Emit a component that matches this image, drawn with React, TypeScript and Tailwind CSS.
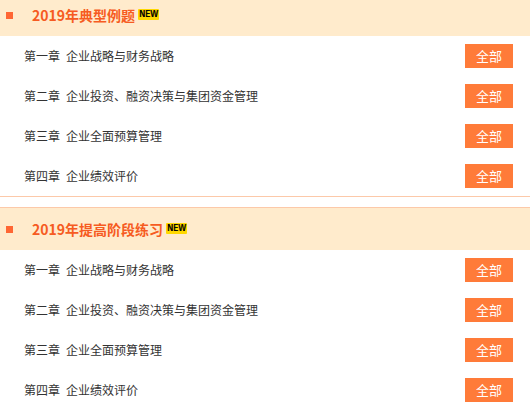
import React from 'react';

interface Section {
  title: string;
  chapters: { no: string; name: string }[];
}

const chapters = [
  { no: '第一章', name: '企业战略与财务战略' },
  { no: '第二章', name: '企业投资、融资决策与集团资金管理' },
  { no: '第三章', name: '企业全面预算管理' },
  { no: '第四章', name: '企业绩效评价' },
];

const sections: Section[] = [
  { title: '2019年典型例题', chapters },
  { title: '2019年提高阶段练习', chapters },
];

const NewBadge: React.FC = () => (
  <span className="-mt-[1px] ml-[3px] inline-flex h-[11px] w-[21px] items-center justify-center rounded-[1px] bg-[#ffd800] text-[8px] leading-none text-black [font-family:'DejaVu_Sans',sans-serif] [text-shadow:0.4px_0_0_#000]">
    NEW
  </span>
);

const App: React.FC = () => {
  return (
    <div className="h-[406px] w-[530px] overflow-hidden bg-white [font-family:'Noto_Sans_CJK_SC','Noto_Sans',sans-serif]">
      <div className="-mt-[7px]">
        {sections.map((section) => (
          <div key={section.title} className="mb-[10px] border-b border-[#fcc9a9]">
            {/* section header */}
            <div className="flex h-[43px] items-center border-t border-[#fcc9a9] bg-[#ffebcc] pl-[6px]">
              <span className="h-[7px] w-[7px] bg-[#ff6633]"></span>
              <span className="ml-[19px] text-[14px] font-bold text-[#f65b22]">{section.title}</span>
              <NewBadge />
            </div>
            {/* chapter rows */}
            {section.chapters.map((c) => (
              <div key={c.no} className="flex h-10 items-center justify-between pl-[24px] pr-[17px]">
                <div className="text-[12px] text-[#333]">
                  <span>{c.no}</span>
                  <span className="ml-[6px]">{c.name}</span>
                </div>
                <button className="flex h-6 w-12 items-center justify-center bg-[#ff7b39] text-[13px] text-white">
                  全部
                </button>
              </div>
            ))}
          </div>
        ))}
      </div>
    </div>
  );
};

export default App;
